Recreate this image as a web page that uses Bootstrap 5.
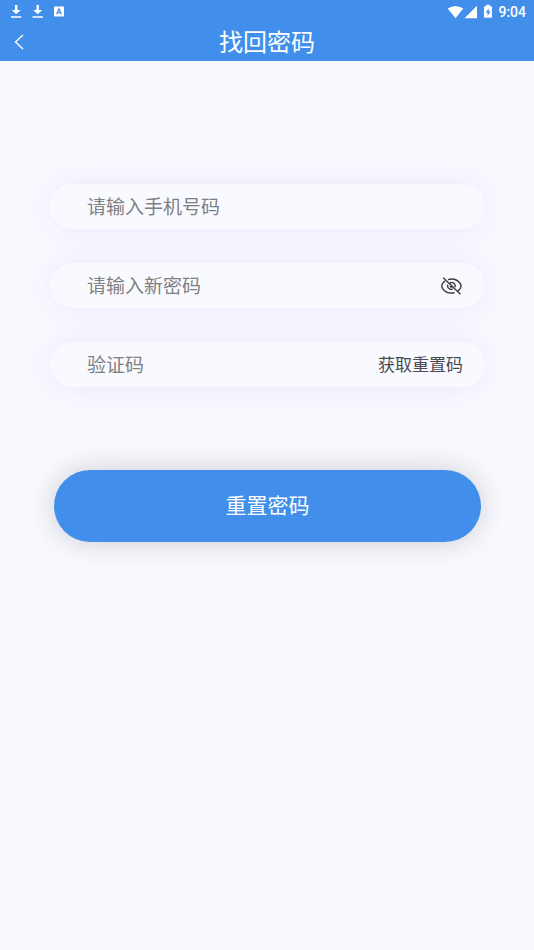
<!DOCTYPE html>
<html lang="zh-CN">
<head>
<meta charset="utf-8">
<meta name="viewport" content="width=device-width, initial-scale=1">
<title>找回密码</title>
<link href="https://cdn.jsdelivr.net/npm/bootstrap@5.3.0/dist/css/bootstrap.min.css" rel="stylesheet">
<style>
body { font-family: "Noto Sans", "Noto Sans CJK SC", sans-serif; background: #f9faff; }
.app-top { background: #418fea; }
.status-bar { height: 23px; padding: 0 8px 0 10px; }
.status-time { font: 500 14px/22px Roboto, sans-serif; }
.title-bar { height: 38px; grid-template-columns: 38px 1fr 38px; }
.page-title { font-size: 24px; line-height: 36px; }
.back-btn { height: 38px; }
.reset-form { padding: 123px 49px 48px 50px; }
.field-stack { gap: 34px; }
.pill-field { height: 45px; padding: 0 22px 0 37px; background: #f9faff; box-shadow: 0 0 32px rgba(90, 70, 220, .1); }
.pill-input, .pill-input:focus { font-size: 19px; line-height: 30px; color: #333; }
.pill-input::placeholder { color: #808084; opacity: 1; }
.code-btn { font-size: 17px; line-height: 24px; color: #4a4a50; }
.submit-wrap { padding: 83px 4px 0; }
.submit-btn, .submit-btn:hover { height: 72px; font-size: 21px; color: #fff; background: #418fea; box-shadow: 0 0 28px rgba(40, 35, 40, .22); }
</style>
</head>
<body class="min-vh-100">
<header class="app-top text-white">
  <div class="status-bar d-flex align-items-center justify-content-between">
    <div class="d-flex align-items-center">
      <svg class="me-2" width="13" height="15" viewBox="0 0 13 15" aria-hidden="true"><path d="M5 1h2.400v5h3.300L6.200 10.200 1.700 6H5zM1 12.200h10.400v1.500H1z" fill="#fff"/></svg>
      <svg class="me-2" width="13" height="15" viewBox="0 0 13 15" aria-hidden="true"><path d="M5.500 1h2.400v5h3.300L6.700 10.200 2.200 6h3.300zM1.500 12.200h10.400v1.500H1.500z" fill="#fff"/></svg>
      <svg width="14" height="15" viewBox="0 0 14 15" aria-hidden="true"><rect x="2" y="2.500" width="10" height="10" rx="1" fill="#fff"/><path d="M4.700 10.200 7 4.800l2.300 5.400M5.500 8.600h3" fill="none" stroke="#418fea" stroke-width="1.300"/></svg>
    </div>
    <div class="d-flex align-items-center">
      <svg width="48" height="16" viewBox="0 0 48 16" aria-hidden="true"><path d="M1.700 4.600Q9.500-.800 17.300 4.600L9.500 14.200zM31 1.700v12.500H18.500z" fill="#fff"/><path d="M40.300.800h3.400v1.500h1.500q.800 0 .800.800v9.900q0 .800-.800.800h-6.400q-.800 0-.800-.800V3.100q0-.800.800-.800h1.500z" fill="#fff"/><path d="m42.700 4.200-3 4.500h1.900v3.400l3-4.700h-1.900z" fill="#418fea"/></svg>
      <span class="status-time ms-1">9:04</span>
    </div>
  </div>
  <div class="title-bar d-grid align-items-center">
    <button type="button" class="back-btn btn p-0 border-0 d-flex align-items-center justify-content-center" aria-label="返回">
      <svg width="12" height="18" viewBox="0 0 12 18" aria-hidden="true"><path d="M10 2 2.500 9l7.500 7" fill="none" stroke="#fff" stroke-width="1.400"/></svg>
    </button>
    <h1 class="page-title fw-normal text-center m-0">找回密码</h1>
  </div>
</header>
<main>
  <form class="reset-form">
    <div class="field-stack d-flex flex-column">
      <div class="pill-field rounded-pill d-flex align-items-center">
        <input type="tel" class="pill-input form-control bg-transparent border-0 shadow-none p-0" placeholder="请输入手机号码" aria-label="手机号码">
      </div>
      <div class="pill-field rounded-pill d-flex align-items-center">
        <input type="password" class="pill-input form-control bg-transparent border-0 shadow-none p-0" placeholder="请输入新密码" aria-label="新密码">
        <button type="button" class="btn p-0 border-0 d-flex" aria-label="显示密码">
          <svg width="23" height="20" viewBox="0 0 23 20" fill="none" stroke="#3c3c40" stroke-width="1.400" aria-hidden="true"><path d="M8 3.600Q15.500 1.500 20 7.200q2.200 2.800 0 5.600-.900 1.200-2.100 2M14.800 16.600Q7 18.500 2.800 12.800q-2-2.800 0-5.600Q3.700 6 5 5.100M3.200 1.700l17.300 16.600M9.800 6.800q3.200-1 4.800 1.200 1 1.700.200 3.300M12.800 13.200q-3.300.700-4.700-1.600-.800-1.500-.200-2.900M10.200 9.800q.300 1.300 1.700 1.500"/></svg>
        </button>
      </div>
      <div class="pill-field rounded-pill d-flex align-items-center">
        <input type="text" class="pill-input form-control bg-transparent border-0 shadow-none p-0" placeholder="验证码" aria-label="验证码">
        <button type="button" class="code-btn btn p-0 border-0 text-nowrap">获取重置码</button>
      </div>
    </div>
    <div class="submit-wrap">
      <button type="submit" class="submit-btn btn border-0 rounded-pill w-100">重置密码</button>
    </div>
  </form>
</main>
<script src="https://cdn.jsdelivr.net/npm/bootstrap@5.3.0/dist/js/bootstrap.bundle.min.js"></script>
</body>
</html>
